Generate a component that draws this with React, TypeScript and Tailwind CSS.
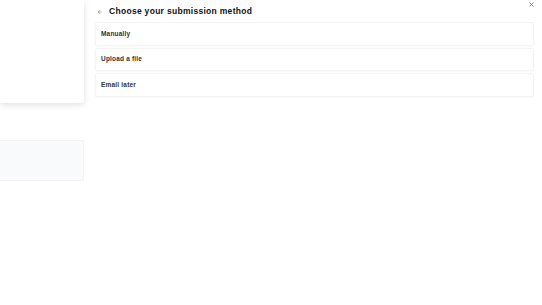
import { X, ArrowLeft } from 'lucide-react';

const methods = ['Manually', 'Upload a file', 'Email later'];

export default function App() {
  return (
    <div
      className="relative w-[542px] h-[305px] bg-white overflow-hidden flex"
      style={{ fontFamily: '"Liberation Sans", Arial, sans-serif' }}
    >
      {/* Left column */}
      <div className="w-[84px] shrink-0 flex flex-col">
        <div className="h-[103px] bg-white shadow-[0_2px_6px_rgba(0,0,0,0.12)] rounded-br-[3px]" />
        <div className="mt-[37px] h-[41px] bg-[#f9fafb] border border-[#f3f3f5] border-l-0" />
      </div>

      {/* Main */}
      <div className="flex-1 pl-[11px] pr-[8px] pt-[5px]">
        <div className="flex items-center h-[13px] gap-[6px] pl-[2px]">
          <ArrowLeft className="w-[6px] h-[6px] text-[#777]" strokeWidth={2} />
          <h1 className="text-[8.5px] font-bold tracking-[0.035em] text-[#111]">Choose your submission method</h1>
        </div>
        <div className="mt-[4px] flex flex-col gap-[2px]">
          {methods.map((m) => (
            <div
              key={m}
              className="h-[23.5px] flex items-center px-[5px] bg-white border border-[#f4f4f4] rounded-[2px] shadow-[0_1px_2px_rgba(0,0,0,0.03)] text-[6.5px] font-bold tracking-[0.03em] text-[#333]"
            >
              {m}
            </div>
          ))}
        </div>
      </div>

      <button className="absolute top-[1px] right-[7px] w-[7px] h-[7px] flex items-center justify-center text-[#666]">
        <X className="w-[7px] h-[7px]" strokeWidth={2.5} />
      </button>
    </div>
  );
}
